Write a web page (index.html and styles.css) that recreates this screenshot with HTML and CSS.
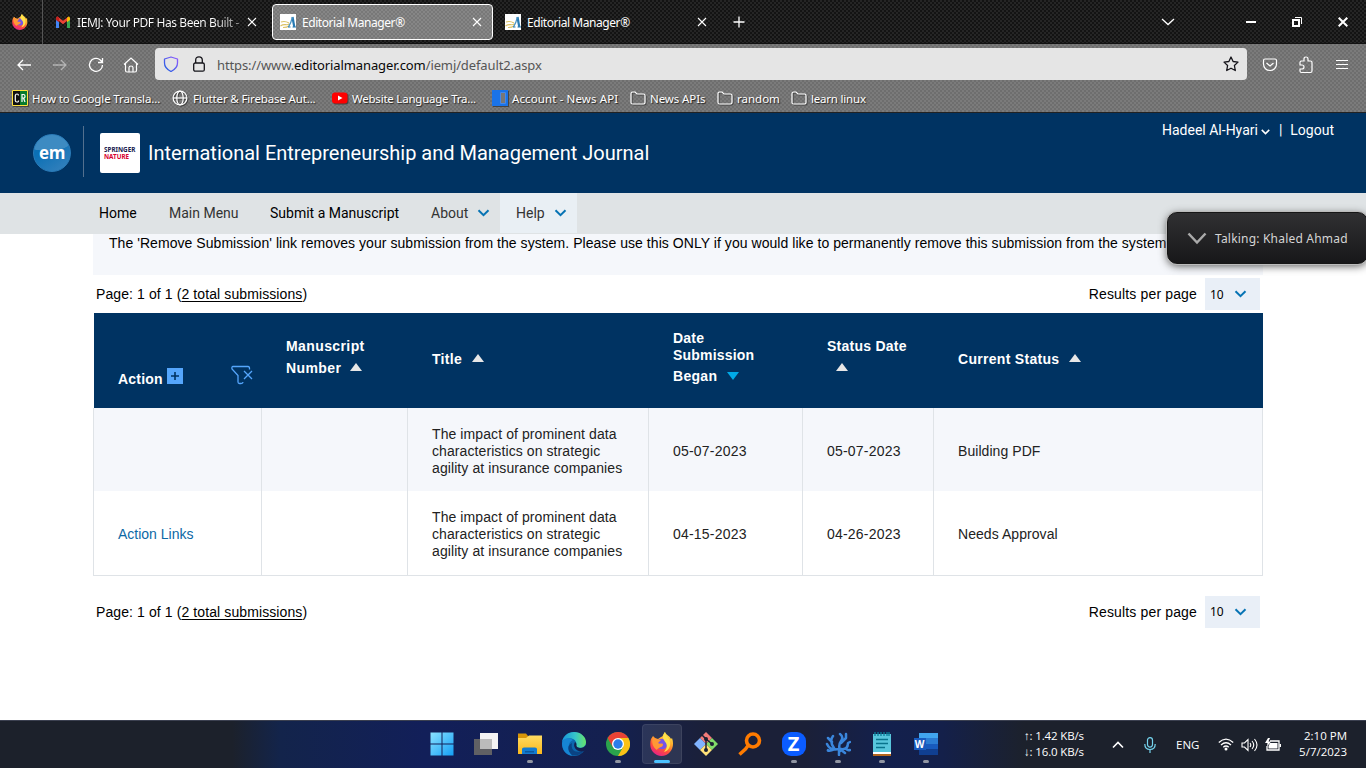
FILE: index.html
```html
<!DOCTYPE html>
<html lang="en">
<head>
<meta charset="utf-8">
<title>Editorial Manager®</title>
<link rel="stylesheet" href="styles.css">
</head>
<body>
<svg class="defs" width="0" height="0">
  <defs>
    <linearGradient id="ffg" x1=".8" y1="0" x2=".3" y2="1"><stop offset="0" stop-color="#fff04a"/><stop offset=".4" stop-color="#ffa42b"/><stop offset=".7" stop-color="#ff4a3d"/><stop offset="1" stop-color="#e3208c"/></linearGradient>
    <linearGradient id="wing" x1="0" y1="0" x2="1" y2="1"><stop offset="0" stop-color="#8be2ff"/><stop offset="1" stop-color="#149ff5"/></linearGradient>
    <linearGradient id="edgeg" x1="0" y1="0" x2="1" y2="0"><stop offset="0" stop-color="#1795db"/><stop offset=".55" stop-color="#36c5c9"/><stop offset="1" stop-color="#68e46a"/></linearGradient>
    <linearGradient id="foldg" x1="0" y1="0" x2="0" y2="1"><stop offset="0" stop-color="#ffdb62"/><stop offset="1" stop-color="#fbb81c"/></linearGradient>
    <linearGradient id="shieldg" x1="0" y1="1" x2="1" y2="0"><stop offset="0" stop-color="#1c5fe0"/><stop offset="1" stop-color="#9059ff"/></linearGradient>
    <symbol id="firefox" viewBox="0 0 24 24">
      <path fill="url(#ffg)" d="M1 7 3 4l2 2 3 1 3-2c2 0 2-3 4-5 1 3 5 4 6 7l1-1c2 5 1 11-2 14-3 4-9 5-13 3C1 20-1 14 1 7Z"/>
      <path fill="#7655e8" d="M7 9c3-3 8-3 10 1 1 5-2 8-6 7-4 0-6-4-4-8Z"/>
      <path fill="#ff9835" d="m3 5 3 2 5 1-3 3c2 2 5-1 5 2-1 3-5 2-6 5C3 16 1 10 3 5Z"/>
      <path fill="#ffe14c" d="M15 0c0 4 5 6 5 10 1 5-2 9-6 10 2-3 4-5 2-9-2-3-5-5-1-11Z"/>
    </symbol>
    <symbol id="emfav" viewBox="0 0 16 16">
      <path fill="#fff" d="M0 0h16v16H0z"/><path d="M1 8q4-1.500 8 1M.5 12c4-3 6 0 9-2M3 13.500q4 0 6-1.500" fill="none" stroke="#dcc264" stroke-width="1.100"/>
      <path d="m12.500 3 1.800 10" fill="none" stroke="#277ab3" stroke-width="2.200"/><path d="M8.500 13Q11 9 12.500 3" fill="none" stroke="#4b94c4" stroke-width="1.200"/><path d="M8 13h2.500M12.500 13H16" stroke="#277ab3"/>
    </symbol>
    <symbol id="x" viewBox="0 0 10 10"><path d="m1 1 8 8M9 1 1 9" fill="none" stroke="#fff" stroke-width="1.100"/></symbol>
    <symbol id="folder" viewBox="0 0 16 14"><path d="M1 11V2.500Q1 1 2.500 1H5l2 2h6.500Q15 3 15 4.500v7q0 1.500-1.500 1.500h-11Q1 13 1 11.500Z" fill="none" stroke="#fff" stroke-width="1.200"/></symbol>
    <symbol id="chev" viewBox="0 0 12 8"><path d="m1 1.200 5 5 5-5" fill="none" stroke="currentColor" stroke-width="2"/></symbol>
  </defs>
</svg>

<div class="tabs">
  <div class="pinned"><svg width="16" height="16"><use href="#firefox"/></svg></div>
  <div class="tab first">
    <svg width="14" height="12" viewBox="0 0 14 12"><path d="M0 1.500V12h3V5L0 2Z" fill="#4285f4"/><path d="M14 1.500V12h-3V5l3-3Z" fill="#34a853"/><path d="M0 2 1.500.4 7 4.800 12.500.4 11 5 7 8.200 3 5Z" fill="#ea4335"/><path d="M11 2 12.500.4Q14 .4 14 2v2l-3 2.200Z" fill="#fbbc04"/><path d="M0 2Q.5 0 2 .6l1 1.200v4.400L0 4Z" fill="#c5221f"/></svg>
    <span class="label gmail">IEMJ: Your PDF Has Been Built -</span>
    <svg width="10" height="10"><use href="#x"/></svg>
  </div>
  <div class="tab active">
    <svg width="16" height="16"><use href="#emfav"/></svg>
    <span class="label">Editorial Manager®</span>
    <svg width="10" height="10"><use href="#x"/></svg>
  </div>
  <div class="tab third">
    <svg width="16" height="16"><use href="#emfav"/></svg>
    <span class="label">Editorial Manager®</span>
    <svg width="10" height="10"><use href="#x"/></svg>
  </div>
  <svg class="plus" width="12" height="12" viewBox="0 0 12 12"><path d="M6 .5v11M.5 6h11" stroke="#fff" stroke-width="1.300"/></svg>
  <div class="window-controls">
    <svg width="14" height="8" viewBox="0 0 14 8"><path d="m1 1 6 5.500L13 1" fill="none" stroke="#fff" stroke-width="1.300"/></svg>
    <svg width="10" height="10" viewBox="0 0 10 10"><path d="M0 5h10" stroke="#fff" stroke-width="2"/></svg>
    <svg width="10" height="10" viewBox="0 0 10 10"><path d="M1 3h6v6H1z" fill="none" stroke="#fff" stroke-width="2"/><path d="M3 .5h6.500V7" fill="none" stroke="#fff"/></svg>
    <svg width="10" height="10" viewBox="0 0 10 10"><path d="m.7.700 8.600 8.600M9.300.7.700 9.300" stroke="#fff" stroke-width="2"/></svg>
  </div>
</div>

<div class="chrome">
  <div class="toolbar">
    <svg width="16" height="16" viewBox="0 0 16 16"><path d="M15 8H2m5-5L2 8l5 5" fill="none" stroke="#fff" stroke-width="1.300"/></svg>
    <svg class="dim" width="16" height="16" viewBox="0 0 16 16"><path d="M1 8h13M9 3l5 5-5 5" fill="none" stroke="#fff" stroke-width="1.300"/></svg>
    <svg width="16" height="16" viewBox="0 0 16 16"><path d="M14.500 8a6.500 6.500 0 1 1-2.200-5L14 4.800M14.500 1v4.500H10" fill="none" stroke="#fff" stroke-width="1.300"/></svg>
    <svg class="home" width="16" height="16" viewBox="0 0 16 16"><path d="m1 7.500 7-6.500 7 6.500M2.500 6.500v7q0 1.500 1.500 1.500h8q1.500 0 1.500-1.500v-7M6 15v-4.500Q6 9 8 9t2 1.500V15" fill="none" stroke="#fff" stroke-width="1.200"/></svg>
    <div class="url">
      <svg width="16" height="16" viewBox="0 0 16 16"><path d="M8 1 14.500 3v4c0 4-2.500 6.500-6.500 8.500C4 13.500 1.500 11 1.500 7V3Z" fill="none" stroke="url(#shieldg)" stroke-width="1.300" stroke-linejoin="round"/></svg>
      <svg class="lock" width="12" height="16" viewBox="0 0 12 16"><rect x=".7" y="7" width="10.600" height="8.200" rx="1.500" fill="none" stroke="#15141a" stroke-width="1.300"/><path d="M2.700 7V4Q2.700.8 6 .8T9.300 4v3" fill="none" stroke="#15141a" stroke-width="1.300"/></svg>
      <span class="address">https://www.<b>editorialmanager.com</b>/iemj/default2.aspx</span>
      <svg class="star" width="16" height="16" viewBox="0 0 16 16"><path d="m8 1 2.100 4.500 4.900.6-3.600 3.400.9 5L8 12.200l-4.300 2.300.9-5L1 6.100l4.900-.6Z" fill="none" stroke="#15141a" stroke-width="1.300" stroke-linejoin="round"/></svg>
    </div>
    <svg class="pocket" width="16" height="14" viewBox="0 0 16 14"><path d="M1.500 2.500Q1.500 1 3 1h10q1.500 0 1.500 1.500V6c0 4-3 6.500-6.500 6.500S1.500 10 1.500 6Z" fill="none" stroke="#fff" stroke-width="1.200"/><path d="m4.500 5 3.500 3 3.500-3" fill="none" stroke="#fff" stroke-width="1.300"/></svg>
    <svg class="puzzle" width="16" height="18" viewBox="0 0 16 18"><path d="M2 9V6.500Q2 5 3.500 5H6V3q0-2 2-2t2 2v2h2.500Q14 5 14 6.500V15q0 1.500-1.500 1.500h-9Q2 16.500 2 15v-2h2q2 0 2-2T4 9Z" fill="none" stroke="#fff" stroke-width="1.200"/></svg>
    <svg width="12" height="12" viewBox="0 0 12 12"><path d="M0 1.500h12M0 5.500h12M0 9.500h12" stroke="#fff"/></svg>
  </div>
  <div class="bookmarks">
    <div class="bm w1"><svg width="16" height="16" viewBox="0 0 16 16"><path d="M.5.500h15v15H.5z" fill="#111" stroke="#ffe23e"/><path d="M8 1h7v14H8z" fill="#087b2d"/><path d="M6.500 5.500Q6.500 4 5 4T3.300 5.500v5Q3.300 12 5 12t1.500-1.500M10 12V4.500h1.500q1.500 0 1.500 1.800T11.500 8H10m1.500 0L13 12" fill="none" stroke="#fff" stroke-width="1.200"/></svg><span>How to Google Transla...</span></div>
    <div class="bm w2"><svg width="16" height="16" viewBox="0 0 16 16"><g fill="none" stroke="#fff" stroke-width="1.200"><circle cx="8" cy="8" r="6.900"/><ellipse cx="8" cy="8" rx="3.200" ry="6.900"/><path d="M1 8h14"/></g></svg><span>Flutter &amp; Firebase Aut...</span></div>
    <div class="bm w3"><svg width="16" height="16" viewBox="0 0 16 16"><rect y="2.500" width="15.500" height="11" rx="3" fill="#f00"/><path d="m6 5.500 4.500 2.500L6 10.500Z" fill="#fff"/></svg><span>Website Language Tra...</span></div>
    <div class="bm w4"><svg width="16" height="16" viewBox="0 0 16 16"><path d="M0 0h16v16H0z" fill="#1a73e8"/><path d="M8.500 2.500h5v11h-5z" fill="#777" stroke="#4388ed"/></svg><span>Account - News API</span></div>
    <div class="bm w5"><svg width="16" height="14"><use href="#folder"/></svg><span>News APIs</span></div>
    <div class="bm w6"><svg width="16" height="14"><use href="#folder"/></svg><span>random</span></div>
    <div class="bm w7"><svg width="16" height="14"><use href="#folder"/></svg><span>learn linux</span></div>
  </div>
</div>

<header class="site-head">
  <div class="em"><span>em</span></div>
  <div class="rule"></div>
  <div class="springer"><span>SPRINGER</span><span class="red">NATURE</span></div>
  <h1>International Entrepreneurship and Management Journal</h1>
  <div class="user"><span>Hadeel Al-Hyari</span><svg width="9" height="6"><use href="#chev"/></svg><span class="bar">|</span><span>Logout</span></div>
</header>

<nav class="menu">
  <a class="home-link">Home</a><a class="main-link">Main Menu</a><a class="submit-link">Submit a Manuscript</a>
  <a class="about-link">About<svg width="13" height="8"><use href="#chev"/></svg></a>
  <a class="help">Help<svg width="13" height="8"><use href="#chev"/></svg></a>
</nav>

<main>
  <div class="notice"><p>The 'Remove Submission' link removes your submission from the system. Please use this ONLY if you would like to permanently remove this submission from the system.</p></div>
  <div class="pager">
    <span class="pages">Page: 1 of 1 (<u>2 total submissions</u>)</span><span class="rpp">Results per page</span><span class="select">10<svg width="13" height="8"><use href="#chev"/></svg></span>
  </div>
  <table>
    <colgroup><col class="c1"><col class="c2"><col class="c3"><col class="c4"><col class="c5"><col class="c6"></colgroup>
    <thead><tr>
      <th><div class="action"><span>Action</span><svg width="16" height="16" viewBox="0 0 16 16"><path d="M0 0h16v16H0z" fill="#55a6fc"/><path d="M8 4v8M4 8h8" stroke="#003362" stroke-width="1.600"/></svg>
        <svg class="filter" width="22" height="20" viewBox="0 0 22 20"><path d="M18.500 4.500V3.300Q18.500 1.500 17 1.500H2Q.5 1.500 1 4l6 6.500V17q0 1.500 1.500 1.500H10q2 0 2-1.500M13 6l8 8m0-8-8 8" fill="none" stroke="#55a6fc" stroke-width="1.300"/></svg></div></th>
      <th><div class="h2">Manuscript<br>Number<i class="up"></i></div></th>
      <th><div class="h3">Title<i class="up"></i></div></th>
      <th><div class="h4"><div>Date<br>Submission</div><div class="began">Began<i class="down"></i></div></div></th>
      <th><div class="h5">Status Date<br><i class="up"></i></div></th>
      <th><div class="h3">Current Status<i class="up"></i></div></th>
    </tr></thead>
    <tbody>
      <tr class="odd"><td></td><td></td><td>The impact of prominent data<br>characteristics on strategic<br>agility at insurance companies</td><td class="date">05-07-2023</td><td class="date">05-07-2023</td><td class="status">Building PDF</td></tr>
      <tr><td class="links"><a>Action Links</a></td><td></td><td>The impact of prominent data<br>characteristics on strategic<br>agility at insurance companies</td><td class="date">04-15-2023</td><td class="date">04-26-2023</td><td class="status">Needs Approval</td></tr>
    </tbody>
  </table>
  <div class="pager bottom">
    <span class="pages">Page: 1 of 1 (<u>2 total submissions</u>)</span><span class="rpp">Results per page</span><span class="select">10<svg width="13" height="8"><use href="#chev"/></svg></span>
  </div>
</main>

<div class="talking"><svg width="20" height="13" viewBox="0 0 20 13"><path d="m1.500 1.500 8.500 9 8.500-9" fill="none" stroke="#aaa" stroke-width="2.500"/></svg><span>Talking: Khaled Ahmad</span></div>

<footer class="taskbar">
  <div class="apps">
    <div class="app"><svg width="24" height="24" viewBox="0 0 24 24"><path fill="url(#wing)" d="M.5.500h11v11H.5zm12 0h11v11h-11zm-12 12h11v11H.5zm12 0h11v11h-11z"/></svg></div>
    <div class="app"><svg width="24" height="24" viewBox="0 0 24 24"><path fill="#f3f3f3" d="M6 1h18v16H6z"/><path fill="#606064" d="M0 7h18v16H0z"/><path fill="#bbb" d="M6 7h12v10H6z"/></svg></div>
    <div class="app run"><svg width="24" height="24" viewBox="0 0 24 24"><path fill="#d89508" d="M0 1.500h8l2 2.500v4H0z"/><path fill="url(#foldg)" d="M0 6h8l3-2.500h13V22H0z"/><path fill="#127bd1" d="M4 22v-5q0-1.500 2-1.500h11q2 0 2 1.500v5z"/><path fill="#0c579d" d="M7 19h9v1.500H7z"/></svg></div>
    <div class="app"><svg width="24" height="24" viewBox="0 0 24 24"><circle cx="12" cy="12" r="12" fill="#0c67af"/><path fill="url(#edgeg)" d="M0 10C1 4 6 0 12 0c7 0 12 5 12 10 0 5-5 7-9 5-2-1 0-2-1-5C12 5 4 5 0 10Z"/><path fill="#1685d4" d="M0 11c1-5 7-6 11-3-5 2-6 9-1 15.800C4 23 0 18 0 11Z"/><path fill="#0a4384" d="M10 11c-2 8 5 11 12 7-3 5-7 6-12 5-5-4-5-10 0-12Z"/><path fill="#14204f" d="M13 10c3 2 0 4 3 5.500 3 1.200 6 .5 8-2.500v4l-2 2c-7 2-12-4-9-9Z"/></svg></div>
    <div class="app run"><svg width="24" height="24" viewBox="0 0 24 24"><circle cx="12" cy="12" r="12" fill="#2ba24c"/><path fill="#fbc116" d="M12 6h10.400A12 12 0 0 1 12 24l5.200-9Z"/><path fill="#e94235" d="M1.600 6a12 12 0 0 1 20.800 0H12l-5.200 9Z"/><circle cx="12" cy="12" r="6" fill="#fff"/><circle cx="12" cy="12" r="4.700" fill="#2b7de9"/></svg></div>
    <div class="app current"><svg width="24" height="24"><use href="#firefox"/></svg></div>
    <div class="app"><svg width="24" height="24" viewBox="0 0 24 24"><path fill="#f37b79" d="m12 0 6 6-6 6-6-6z"/><path fill="#80b3ff" d="m6 6 6 6-6 6-6-6z"/><path fill="#80db69" d="m18 6 6 6-6 6-6-6z"/><path fill="#ffe278" d="m12 12 6 6-6 6-6-6z"/><path d="M7 2 12 7v11m0-11 6 5" fill="none" stroke="#1b2033" stroke-width="1.500"/><g fill="#1b2033"><circle cx="12" cy="7" r="2"/><circle cx="18" cy="12" r="2"/><circle cx="12" cy="18" r="2"/></g></svg></div>
    <div class="app"><svg width="24" height="24" viewBox="0 0 24 24"><circle cx="15" cy="8.500" r="6.500" fill="none" stroke="#ff7b00" stroke-width="3.600"/><path d="m10.500 13-3 4-6 5.500" fill="none" stroke="#ff7b00" stroke-width="3.500"/></svg></div>
    <div class="app run"><span class="zoom-icon">Z</span></div>
    <div class="app run"><svg width="26" height="24" viewBox="0 0 26 24"><path d="M14 23v-6Q5 19 2 12M10 17Q2 20 3 18M9 16Q4 9 8 4M7 10 3 6M15 19q-2-6 1-10T15 2m1 9 5-5V2m-5 15q7 1 7-6l2-1m-4 6q1 3 4 2M15 17l5 4" fill="none" stroke="#3a86dc" stroke-width="2.500" stroke-linecap="round" stroke-linejoin="round"/></svg></div>
    <div class="app run"><svg width="20" height="24" viewBox="0 0 20 24"><path fill="#58c6dc" d="M1 2h18v19H1z"/><path d="M3 0v4m3-4v4m3-4v4m3-4v4m3-4v4m2-4v4" stroke="#087e98" stroke-width="1.300"/><path d="M4 7.500h12M4 11.500h12M4 15.500h9" stroke="#08748d" stroke-width="1.500"/><path fill="#fff" d="M1 20h18v2H1z"/><path fill="#b5651d" d="M1 22h18v2H1z"/></svg></div>
    <div class="app run"><div class="word"><span>W</span></div></div>
  </div>
  <div class="speed"><span>↑: 1.42 KB/s</span><span>↓: 16.0 KB/s</span></div>
  <svg class="up-arrow" width="12" height="8" viewBox="0 0 12 8"><path d="m1 6.500 5-5 5 5" fill="none" stroke="#fff" stroke-width="1.600"/></svg>
  <svg class="mic" width="12" height="16" viewBox="0 0 12 16"><rect x="3.500" y=".6" width="5" height="9.500" rx="2.500" fill="none" stroke="#75d4ee" stroke-width="1.200"/><path d="M.8 7q0 5.500 5.200 5.500T11.200 7M6 12.500V16" fill="none" stroke="#75d4ee" stroke-width="1.200"/></svg>
  <span class="eng">ENG</span>
  <div class="tray">
    <svg width="16" height="13" viewBox="0 0 16 13"><path d="M.8 4.500Q8-2.300 15.200 4.500M3 7q5-4.500 10 0M5.300 9.300q2.700-2.500 5.400 0" fill="none" stroke="#fff" stroke-width="1.300"/><circle cx="8" cy="11" r="1.500" fill="#fff"/></svg>
    <svg width="17" height="14" viewBox="0 0 17 14"><path d="M1 5h2.500L7 1.500v11L3.500 9H1Zm8 0q1.500 2 0 4m2-6q3.500 4 0 8m2.500-10q5 6 0 12" fill="none" stroke="#fff" stroke-width="1.100"/></svg>
    <svg width="17" height="14" viewBox="0 0 17 14"><path d="M5 3h9v9H2V8" fill="none" stroke="#fff" stroke-width="1.300"/><path d="M5 5h7.500v5.500h-9V8ZM14.500 6H16v3h-1.500ZM3 0 0 5h2.500L2 8.500 6 3.500H3.500L5 0Z" fill="#fff"/></svg>
  </div>
  <div class="clock"><span>2:10 PM</span><span>5/7/2023</span></div>
</footer>
</body>
</html>
```
FILE: styles.css
```css
* { box-sizing: border-box; }
body { margin: 0; width: 1366px; height: 768px; overflow: hidden; background: #fff; display: flex; flex-direction: column; position: relative; font: 14px "Liberation Sans", sans-serif; color: #111; }
svg { flex: none; display: block; }
.defs { position: absolute; }

/* browser chrome */
.tabs, .chrome { font: 12px "Noto Sans", sans-serif; color: #fff; }
.tabs { height: 44px; flex: none; display: flex; align-items: center; border-bottom: 1px solid #111;
  background: repeating-conic-gradient(#131313 0 25%, #252525 0 50%) 0 0 / 4px 4px; }
.pinned { width: 43px; height: 44px; padding: 14px 0 0 12px; border-right: 1px solid #555; }
.tab { display: flex; align-items: center; height: 36px; }
.label { white-space: nowrap; flex: 1; letter-spacing: -.44px; padding-top: 1px; }
.first { width: 214px; margin-left: 13px; gap: 7px; }
.first .label { flex: none; width: 165px; letter-spacing: -.41px; background: linear-gradient(90deg, #fff 82%, #777) text; -webkit-text-fill-color: transparent; }
.first svg:last-child { margin-left: -2px; }
.active { width: 221px; margin-left: 2px; padding: 0 10px 0 7px; gap: 6px; border: 1px solid #fff; border-radius: 4px; background: repeating-conic-gradient(#787878 0 25%, #868686 0 50%) 0 0 / 4px 4px; }
.third { width: 202px; margin-left: 12px; gap: 6px; }
.plus { margin-left: 26px; }
.window-controls { flex: 1; display: flex; align-items: center; justify-content: flex-end; gap: 36px; padding-right: 18px; }
.window-controls svg:first-child { margin-right: 35px; }
.chrome { height: 69px; flex: none; background: repeating-conic-gradient(#6e6e6e 0 25%, #7b7b7b 0 50%) 0 0 / 4px 4px; border-bottom: 1px solid #222; }
.toolbar { height: 40px; display: flex; align-items: center; gap: 20px; padding-left: 16px; padding-top: 1px; }
.dim { opacity: .45; }
.url { width: 1092px; height: 32px; margin: -1px 0 0 -4px; padding: 0 8px; background: #e5e5e5; border-radius: 4px; display: flex; align-items: center; color: #555; font-size: 13px; }
.toolbar .home { margin-left: -1px; }
.url .lock { margin-left: 14px; }
.address { margin: 1px 0 0 12px; flex: 1; letter-spacing: -.11px; }
.address b { font-weight: 400; color: #080808; }
.pocket { margin-left: -5px; }
.puzzle { margin-left: 0; }
.toolbar > svg:last-child { margin-left: 2px; }
.bookmarks { display: flex; align-items: center; height: 28px; padding-left: 12px; }
.bm { display: flex; align-items: center; gap: 4px; font-size: 11.500px; white-space: nowrap; text-shadow: 1px 1px 1px #222; }
.bm svg { filter: drop-shadow(1px 1px 0 #444); }
.w1 { width: 160px; letter-spacing: -.13px; }
.w2 { width: 160px; letter-spacing: -.15px; gap: 5px; }
.w3 { width: 160px; letter-spacing: -.22px; }
.w4 { width: 138px; letter-spacing: .12px; }
.w5 { width: 87px; letter-spacing: -.1px; }
.w6 { width: 74px; }
.w7 { letter-spacing: -.2px; }

/* journal header */
.site-head { height: 80px; flex: none; background: #003362; display: flex; align-items: center; color: #fff; padding-left: 33px; font-family: Roboto, sans-serif; }
.em { width: 38px; height: 38px; border-radius: 50%; background: radial-gradient(ellipse 24px 9px at 13px 7px, #3d8bc2 95%, transparent), linear-gradient(145deg, #0b70b5 35%, #3a83bd); border: 1px solid #2a7bb8; display: grid; place-items: center; font: bold 17px/1 "Open Sans", sans-serif; }
.em span { margin-top: -1px; letter-spacing: -.3px; }
.rule { width: 1px; height: 51px; background: #53708e; margin: -4px 0 0 12px; }
.springer { width: 40px; height: 40px; background: #fff; border-radius: 2px; margin-left: 16px; display: flex; flex-direction: column; justify-content: center; padding-left: 4px; font: bold 6.300px/7px "Noto Sans", sans-serif; color: #17204e; }
.red { color: #d8002f; }
h1 { font: 20px/24px Roboto, sans-serif; margin: 0 0 0 8px; white-space: nowrap; flex: 1; }
.user { align-self: flex-start; margin: 9px 32px 0 0; font-size: 14px; line-height: 17px; display: flex; align-items: center; }
.user svg { margin: 3px 9px 0 3px; }
.bar { margin-right: 8px; }
.menu { height: 41px; flex: none; background: #dfe3e5; display: flex; font: 14px/40px Roboto, sans-serif; color: #333; padding-left: 99px; }
.menu a { white-space: nowrap; }
.home-link, .submit-link { color: #000; }
.home-link { width: 70px; }
.main-link { width: 101px; }
.submit-link { width: 161px; }
.about-link { width: 69px; }
.menu svg, .select svg { color: #0673b4; }
.about-link, .help { display: flex; align-items: center; gap: 9px; height: 40px; }
.help { background: #e9eff4; width: 77px; padding-left: 16px; }

/* submissions */
main { flex: 1; padding: 0 103px 0 93px; }
.notice { height: 41px; background: #f5f7fb; padding-left: 16px; }
.notice p { margin: 0; line-height: 19px; white-space: nowrap; color: #000; letter-spacing: .052px; }
.pager { height: 38px; display: flex; align-items: center; padding: 0 3px; color: #000; }
.pages { flex: 1; letter-spacing: .1px; }
.rpp { margin-right: 8px; letter-spacing: .15px; }
u { text-underline-offset: 2px; }
.select { width: 55px; height: 32px; background: #e9eff7; display: flex; align-items: center; gap: 10px; padding-left: 5px; font: 12px "Noto Sans", sans-serif; }
table { table-layout: fixed; width: 1170px; border-collapse: collapse; }
.c1 { width: 168px; }
.c2 { width: 146px; }
.c3 { width: 241px; }
.c4 { width: 154px; }
.c5 { width: 131px; }
.c6 { width: 329px; }
th { height: 95px; background: #003362; color: #fff; padding: 0 0 0 24.500px; text-align: left; line-height: 17px; letter-spacing: .2px; }
td { height: 83px; padding: 3px 0 0 24px; border: 1px solid #dfe3e7; border-top: 0; border-bottom: 0; line-height: 17px; white-space: nowrap; color: #222; letter-spacing: .09px; }
tbody tr:last-child td { border-bottom: 1px solid #dfe3e7; height: 84px; }
.odd { background: #f5f7fb; }
td.date { letter-spacing: .2px; }
td.status { letter-spacing: .06px; }
td.links { letter-spacing: 0; }
td a { color: #0c68a5; }
.action { display: flex; padding-top: 30px; align-items: center; }
.action span { padding-top: 8px; }
.action > svg { margin-left: 4px; }
.action > .filter { margin: -2px 0 0 48px; }
.h2 { line-height: 22px; padding-bottom: 8px; letter-spacing: .4px; }
.h2 .up { margin-left: 9px; }
.h3 { padding-bottom: 2px; letter-spacing: .3px; }
.h4 { padding-bottom: 3px; }
.began { line-height: 23px; letter-spacing: .3px; padding-top: 1px; }
.h5 { line-height: 22px; padding-bottom: 8px; letter-spacing: .25px; }
.h5 i { margin-left: 9px; }
i { display: inline-block; margin-left: 10px; border: 6px solid transparent; }
.up { border-bottom: 8px solid #e7e7e7; border-top: 0; vertical-align: 2px; }
.down { border-top: 8px solid #00aae8; border-bottom: 0; vertical-align: 1px; }
.bottom { margin-top: 17px; }

.talking { position: absolute; left: 1167px; top: 212px; width: 201px; height: 52px; border-radius: 10px; background: linear-gradient(#303032, #171719); border: 1px solid #161616; box-shadow: 0 0 0 1px #bbb, 0 2px 9px #555; color: #d5d5d5; display: flex; align-items: center; gap: 8px; padding-left: 19px; font: 12px "Noto Sans", sans-serif; letter-spacing: .2px; white-space: nowrap; }

/* taskbar */
.taskbar { height: 48px; flex: none; border-top: 1px solid #3b4050; display: flex; align-items: center; padding-left: 419px; color: #fff; font: 11.500px/16px "Open Sans", sans-serif; background: linear-gradient(90deg, #1c212b 17%, #13244b 20.500%, #121f59 31%, #14204f 45%, #1b2038 52%, #1b2038 59%, #13204d 65%, #14204a 69%, #1c212c 75%); }
.apps { display: flex; width: 528px; }
.app { width: 44px; height: 47px; display: grid; place-items: center; position: relative; padding: 0 0 1px 1px; }
.run::after, .current::after { content: ""; position: absolute; width: 6px; height: 3px; border-radius: 2px; background: #9196a3; left: 20px; bottom: 5px; }
.current::before { content: ""; position: absolute; inset: 3px 1px 4px 3px; border-radius: 4px; background: #ffffff18; border: 1px solid #ffffff12; }
.current::after { width: 16px; left: 15px; background: #4cc2ff; }
.current svg { position: relative; }
.zoom-icon { width: 24px; height: 24px; border-radius: 9px; background: #0b5cff; display: grid; place-items: center; font: bold 20px/24px "Noto Sans", sans-serif; }
.word { width: 24px; height: 22px; background: linear-gradient(#41a5ee 25%, #2b7cd3 25% 50%, #185abd 50% 75%, #103f91 75%) 5px 0 / 19px 22px no-repeat; display: flex; align-items: center; }
.word span { width: 12px; height: 12px; background: #185abd; font: bold 10px/12px "Noto Sans", sans-serif; text-align: center; }
.speed { width: 90px; margin-left: 77px; display: flex; flex-direction: column; white-space: nowrap; margin-bottom: 1px; letter-spacing: -.15px; }
.up-arrow { margin: 0 20px 0 -2px; }
.eng { margin-left: 20px; width: 42px; font-size: 11.500px; }
.tray { display: flex; gap: 7px; align-items: center; }
.clock { flex: 1; display: flex; flex-direction: column; align-items: flex-end; padding-right: 19px; margin-bottom: 2px; }
```
